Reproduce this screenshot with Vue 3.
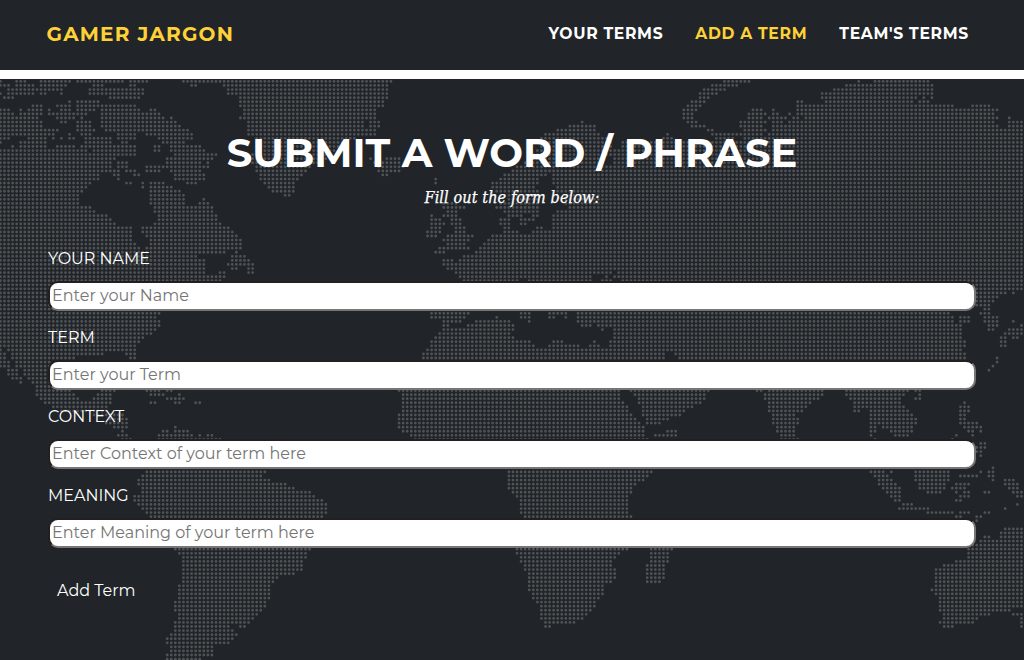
<script setup>
const links = [
  { text: 'Your Terms', active: false },
  { text: 'Add a Term', active: true },
  { text: "Team's Terms", active: false }
]

const fields = [
  { id: 'name', label: 'YOUR NAME', hint: 'Enter your Name' },
  { id: 'term', label: 'TERM', hint: 'Enter your Term' },
  { id: 'context', label: 'CONTEXT', hint: 'Enter Context of your term here' },
  { id: 'meaning', label: 'MEANING', hint: 'Enter Meaning of your term here' }
]

// Dotted world map. Each line is a grid row (or a range of rows) followed by
// the stretches of land in it, in thirds of a pixel from the strip's left edge.
const strips = [
  {
    x: 0,
    rows: `0 -5:6 44:82 118:214 228:372 385:446 545:1024
1 -5:30 44:104 118:202 275:310 385:410 570:590 665:1024
2 20:118 118:190 263:434 680:1024
3 -5:8 20:106 118:142 178:190 263:430 680:1024
4 8:42 325:420 715:1024
5 203:213 228:300 715:1024
6 93:128 167:213 228:300 300:410 715:1024
7 -5:30 57:67 81:128 142:152 178:213 228:285 300:420 446:470 727:1024
8 -5:44 57:128 142:225 228:262 300:482 727:1024
9 -5:118 165:225 240:250 300:495 510:518 715:1024
10 -5:128 180:200 228:275 300:530 740:1024
11 -5:128 228:275 300:543 740:1024
12 -5:178 228:285 312:568 740:1024
13 -5:165 203:213 240:275 350:408 435:580 740:1024
14 -5:32 80:140 155:165 178:190 205:225 250:335 350:410 470:580 765:1024
15 -5:8 57:140 250:335 360:385 482:555 765:1024
16 32:44 57:140 160:225 240:270 280:335 335:405 460:482 508:604 765:1024
17 -5:260 275:405 460:482 510:615 765:1010
18 -5:405 520:653 750:1000
19 -5:350 495:640 750:980
20 -5:335 350:385 495:610 620:628 750:960
21 -5:335 350:385 435:615 620:628 765:940
22 -5:335 340:358 372:410 435:480 510:605 765:920
23 -5:300 340:358 400:420 520:615 777:910
24 -5:300 350:358 520:615 777:895
25 -5:272 372:396 423:432 446:495 555:590 790:885
26 -5:262 423:432 446:520 802:885
27 -5:250 446:543 815:885
28 -5:240 446:555 850:872
29 -5:240 446:555 605:615
30 -5:240 446:555 593:628
31 -5:272 460:640
32 -5:285 460:640
33 -5:325 470:653
34 -5:335 470:660
35 -5:347 460:665
36 -5:397 423:690
37 -5:397 423:702
38 -5:397 435:714
39 -5:397 447:726
40 -5:410 447:726
41 -5:420 435:726
42 -5:680 702:714
43 -5:592 690:738
44 -5:616 690:750
45 -5:616 680:762
46 -5:616 690:714 738:762
47 -5:616 655:678 740:762
48 -5:678
49 -5:665
50-56 -5:500
57 -5:482
58 -5:470
59-60 -5:482
61 -5:470
62 -5:458
63 -5:434
64 -5:422
65 -5:410
66 -5:6 18:410
67 -5:18 30:310 375:408
68 -5:18 32:225 385:408
69-70 -5:30 44:150
71-72 20:55 70:150
73 32:67 80:150
74 57:67 93:150
75 105:215
76 105:215 300:347 435:482 495:518
77 105:225 290:335 447:495 532:543
78 118:240 275:335 495:555
79 130:335 447:468 520:543 580:604
80 155:325
81 180:325
82 275:372
83 320:384
84 310:384
85 335:384 520:530
86 360:372 482:506 520:568
87 350:385 470:580 590:604 618:640
88 360:397 470:665
96 433:800
97 422:788
98 410:812
99 410:860
100 422:885
101 422:932
102 398:945
103 398:970
104 410:982
105 422:982
106 435:982
107 445:970
115 520:932
116 532:920
117 545:920
118-120 545:908
121 545:885
122 545:836
123 545:824
124-127 532:812
128-129 520:800
130 520:788
131 532:775
132 532:762
133 520:750
134 520:690 714:738
135 520:702
136 508:714
137 495:702
138 495:690
139-140 508:640
141 495:640
142 495:604`
  },
  {
    x: 340,
    rows: `0 -5:155
1-4 -5:145
5-6 -5:130
7-9 -5:108
10-11 -5:70 82:120
12 -5:108
13 -5:108
14 -5:45
15 -5:30
16 -5:10
10 722:732
11 685:768
12 648:768
13 612:780 980:988
14 600:800 970:1000
15 600:820 840:1024
16 600:820 845:1024
17 590:1024
18 575:1024
19 90:98 135:180 560:790 820:1024
20 98:185 550:790 820:1024
21 110:195 530:1024
22 110:180 515:630 640:1024
23 123:145 490:620 640:1024
24 283:292 478:595 636:1024
25 283:292 455:595 640:1024
26 455:582 648:1024
27 465:595 648:1024
28 480:595 672:1024
29 495:595 672:1024
30 310:350 480:595 672:1024
31 305:375 465:595 685:1024
32 320:360 490:595 650:1024
33 270:280 305:350 505:545 575:595 640:1024
34 270:305 330:365 480:510 540:560 565:585 636:1024
35 270:305 308:315 330:365 478:510 540:560 636:1024
36 270:305 345:375 490:510 587:608 636:1024
37 258:305 345:375 490:533 575:1024
38 258:292 320:400 452:1024
39 308:390 440:1024
40 320:378 430:1024
41 295:390 417:1024
42 283:315 405:1024
43 368:1024
44 308:340 355:1024
45 308:1024
46 320:1024
47 345:815 830:1024
48 357:755 792:805 818:1024
49 368:535 560:755 780:815 843:1024
57 270:390 540:573 625:683 710:1024
58 270:375 465:475 540:573 625:645 673:683 710:1024
59 308:365 405:512 563:573 710:1024
60 308:328 380:522 722:755 770:1024
61 308:522 782:792 818:1024
62 295:512 818:1024
63 283:522 818:1024
64 270:573 636:670 758:768 807:1024
65 270:585 625:720 748:778 807:1024
66 258:1024
67 246:975 1000:1012
68 246:975
76 172:840 870:1024
77 185:840 880:1024
78 185:840 893:1024
79 185:855 893:1024
80-81 185:867 905:1024
82 172:880 905:1024
83 172:890 918:990
84 172:903 918:965
85 172:915
86 185:915 978:1012
87 210:915 940:1012
88 222:925
96 502:940
97 502:928
98 502:915
99 502:890
100 502:878
101 515:878
102 527:867
103-106 540:867
107 552:878
115 527:867 930:1000
116 527:842 930:988
117 540:830 930:988
118 540:818 930:988
119 552:818 918:976
120 552:830 918:976
121-122 564:830 918:976
123 564:818 918:965
124-125 564:792
126 575:792
127 575:780
128 588:768
129 600:768
130 600:755
131 600:743
132 600:730
133 612:708
134 612:633`
  },
  {
    x: 680,
    rows: `0 130:212 532:540 580:750
1 93:175 495:762
2 68:138 458:762
3 57:115 422:762
4 57:90 422:715 728:738 750:762
5 32:80 348:370 432:703 715:750
6 20:66 348:822 873:932
7 8:54 215:250 275:285 348:957
8 8:42 203:260 275:298 325:335 348:945
9 8:42 203:250 263:322 335:360 373:957 983:992
10 20:54 178:262 275:310 322:945 983:1032
11 30:78 178:250 275:957 980:1032
12 80:102 190:262 275:1032
13 90:250 262:1032
14 105:165 190:1032
15-51 -5:1032
52 -5:980 995:1003
53 -5:957
54 -5:945
55 -5:932
56 -5:860 908:932
57 -5:810 897:932
58 -5:822 835:870 908:957
59 -5:822 835:870 908:957 995:1003
60 -5:845 920:957 1018:1028
61 -5:845 920:945 983:1028
62 -5:845 970:1028
63 -5:845 957:980 995:1018
64-65 -5:858 957:980
66 -5:845
67 -5:858
68 -5:858 945:957
69 945:957
70 932:944
71 920:932
76 -5:90 227:250 262:432 495:688 703:723
77 -5:78 250:432 495:672 715:723
78 -5:78 250:420 507:665 703:723
79 -5:66 262:396 520:665 848:858
80 -5:42 262:384 520:675 836:870
81 -5:18 262:372 520:543 567:688 836:870
82 -5:6 275:348 567:700 836:860
83 275:358 567:712 836:858
84 275:358 567:712 836:895
85 288:348 567:590 604:700 848:908
86 288:348 567:590 630:700 860:882 897:908
87 300:348 567:580 640:688 824:834 873:883
88 300:360 580:590 812:822
89 897:918
90 885:918
91 885:908
92 897:908
95 555:565 932:945
96 567:616 628:638 703:810 897:908 920:945
97 580:628 703:810 836:895 920:945
98 592:640 703:810 932:945 970:1006
99 592:652 715:798 824:870 970:1018
100 604:665 715:798 812:858 983:1018
101 616:665 738:785 824:834 848:870 908:932 995:1028
102 628:665 836:870 1006:1028
103 640:665 824:846
104 665:700 1006:1018
105 652:750 970:980
106 738:822 836:870 908:932
107 824:846 885:908
108 885:895
110 970:1028
111 957:1028
112 908:932 957:1028
113 897:1028
114 873:1028
115-117 860:1028
118 824:1028
119 788:1028
120-124 763:1028
125 750:1028
126 763:1028
127-129 775:1028
130 775:992
131 788:932 995:1028
132 788:895 1018:1028
133 775:882 1018:1028
134 788:822 1018:1028`
  }
]

const PITCH = 4.068
const dots = new Set()
for (const strip of strips) {
  for (const line of strip.rows.split('\n')) {
    const [range, ...runs] = line.trim().split(' ')
    const [first, last = first] = range.split('-').map(Number)
    for (let r = first; r <= last; r++) {
      for (const run of runs) {
        const [a, b] = run.split(':').map(v => strip.x + Number(v) / 3)
        for (let c = Math.ceil((a - 0.4) / PITCH); 0.4 + c * PITCH <= b; c++) dots.add(`${c},${r}`)
      }
    }
  }
}
const mapPath = [...dots]
  .map(d => {
    const [c, r] = d.split(',').map(Number)
    return `M${(0.4 + c * PITCH).toFixed(2)} ${(2.4 + r * PITCH).toFixed(2)}h0`
  })
  .join('')
</script>

<template>
  <div class="page">
    <header class="bar">
      <a class="brand">GAMER JARGON</a>
      <nav class="nav">
        <a v-for="l in links" :key="l.text" :class="['link', { active: l.active }]">{{ l.text.toUpperCase() }}</a>
      </nav>
    </header>
    <main class="submit">
      <svg class="map" width="1024" height="581" viewBox="0 0 1024 581" aria-hidden="true">
        <path :d="mapPath" fill="none" stroke="#505356" stroke-width="2.8" stroke-linecap="round" />
      </svg>
      <div class="content">
        <h1 class="title">SUBMIT A WORD / PHRASE</h1>
        <p class="sub">Fill out the form below:</p>
        <form class="form" @submit.prevent>
          <div v-for="f in fields" :key="f.id" class="field">
            <label :for="f.id" class="label">{{ f.label }}</label>
            <input :id="f.id" class="input" type="text" :placeholder="f.hint" />
          </div>
          <button class="add" type="submit">Add Term</button>
        </form>
      </div>
    </main>
  </div>
</template>

<style>
body { margin: 0; background: #fff; overflow: hidden; }
</style>

<style scoped>
.page {
  width: 1024px;
  height: 660px;
  display: flex;
  flex-direction: column;
  gap: 9px;
  overflow: hidden;
  background: #fff;
  color: #fff;
  font-family: Montserrat, Inter, "Open Sans", sans-serif;
}
.bar {
  height: 70px;
  flex: none;
  box-sizing: border-box;
  padding: 0 55px 2px 46.5px;
  display: flex;
  align-items: center;
  justify-content: space-between;
  background: #212529;
}
.brand {
  color: #fed136;
  font-size: 20px;
  font-weight: 700;
  letter-spacing: 1.25px;
}
.nav { display: flex; gap: 32px; }
.link {
  font-size: 15.6px;
  font-weight: 700;
  letter-spacing: 0.7px;
  line-height: 24px;
}
.active { color: #fed136; }
.submit {
  position: relative;
  flex: 1;
  background: #212529;
  overflow: hidden;
}
.map { position: absolute; inset: 0; }
.content { position: relative; padding: 50px 48px 0; }
.title {
  margin: 0;
  height: 48px;
  line-height: 48px;
  text-align: center;
  font-size: 40px;
  font-weight: 700;
  white-space: nowrap;
}
.sub {
  margin: 9px 0 0;
  height: 24px;
  text-align: center;
  font: italic 16px/24px "Roboto Slab", "DejaVu Serif Condensed", "DejaVu Serif", serif;
  letter-spacing: 0.12px;
  -webkit-text-stroke: 0.25px #fff;
}
.form { display: flex; flex-direction: column; margin-top: 36px; }
.field { height: 79px; display: flex; flex-direction: column; }
.label {
  height: 24px;
  line-height: 24px;
  font-size: 16px;
  margin: 1px 0 10px;
}
.input {
  box-sizing: border-box;
  width: 928px;
  height: 30px;
  padding: 0 2px 2px;
  border: 2px solid;
  border-color: #231f20 #767676 #767676 #231f20;
  border-radius: 10px;
  background: #fff;
  font: 400 16px Montserrat, Inter, sans-serif;
}
.input::placeholder { color: #757575; opacity: 1; }
.add {
  align-self: flex-start;
  margin-top: 9px;
  padding: 8px 9px;
  border: 0;
  background: transparent;
  color: #fff;
  font: 400 16px/24px Montserrat, Inter, sans-serif;
}
</style>
